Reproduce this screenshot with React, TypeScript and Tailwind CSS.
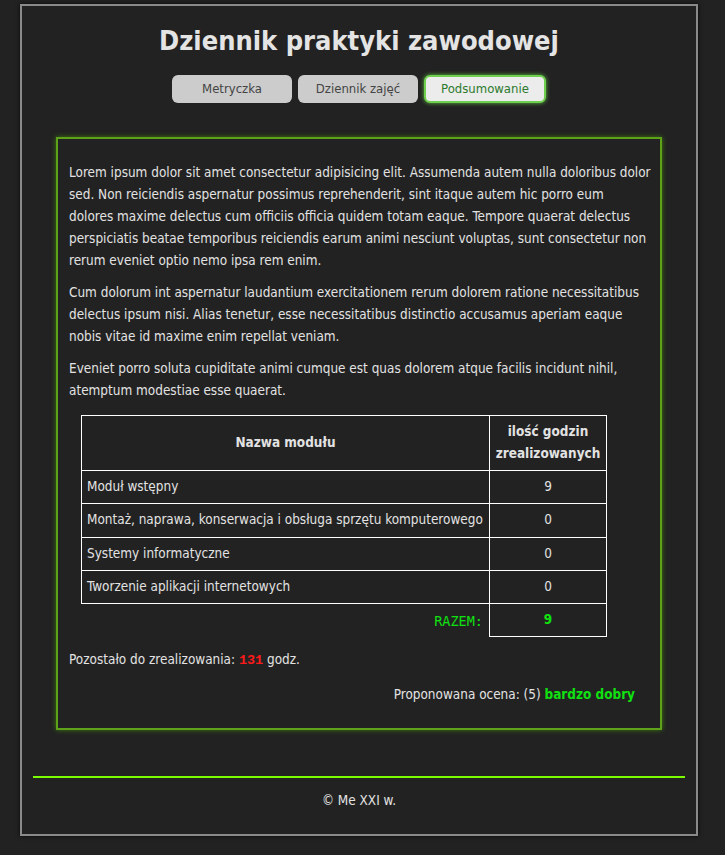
import React from "react";

const rows = [
  { name: "Moduł wstępny", hours: 9 },
  { name: "Montaż, naprawa, konserwacja i obsługa sprzętu komputerowego", hours: 0 },
  { name: "Systemy informatyczne", hours: 0 },
  { name: "Tworzenie aplikacji internetowych", hours: 0 },
];

const tabs = ["Metryczka", "Dziennik zajęć", "Podsumowanie"];

export default function App() {
  const total = rows.reduce((s, r) => s + r.hours, 0);

  return (
    <div className="min-h-[855px] bg-[#222222] pt-[4px] text-[13.45px] text-[#e2e2e2] font-['DejaVu_Sans_Condensed',Tahoma,sans-serif]">
      <div className="ml-[20px] w-[678px] h-[832px] border-2 border-[#8a8a8a] shadow-[0_0_4px_rgba(0,0,0,0.8)] flex flex-col">
        <h1 className="mt-[18px] text-center text-[27px] leading-[34px] font-bold text-[#e4e4e4]">
          Dziennik praktyki zawodowej
        </h1>

        <div className="mt-[17px] flex justify-center gap-[6px]">
          {tabs.map((t, i) =>
            i === 2 ? (
              <button
                key={t}
                className="w-[122px] h-[28px] rounded-[6px] bg-[#ececec] text-[#2d7a2d] border-2 border-[#6fcf4f] shadow-[0_0_4px_#5fbf3f] text-[13px]"
              >
                {t}
              </button>
            ) : (
              <button
                key={t}
                className="w-[120px] h-[28px] rounded-[6px] bg-[#cccccc] text-[#444] text-[13px]"
              >
                {t}
              </button>
            )
          )}
        </div>

        <div className="ml-[34px] mt-[34px] w-[606px] h-[593px] border-2 border-[#5da218] shadow-[0_0_5px_#3f7a10] pl-[11px] pr-[6px] pt-[23px] leading-[22px]">
          <p>
            Lorem ipsum dolor sit amet consectetur adipisicing elit. Assumenda autem nulla doloribus dolor
            sed. Non reiciendis aspernatur possimus reprehenderit, sint itaque autem hic porro eum
            <br />
            dolores maxime delectus cum officiis officia quidem totam eaque. Tempore quaerat delectus
            perspiciatis beatae temporibus reiciendis earum animi nesciunt voluptas, sunt consectetur non
            rerum eveniet optio nemo ipsa rem enim.
          </p>
          <p className="mt-[10px]">
            Cum dolorum int aspernatur laudantium exercitationem rerum dolorem ratione necessitatibus
            delectus ipsum nisi. Alias tenetur, esse necessitatibus distinctio accusamus aperiam eaque
            nobis vitae id maxime enim repellat veniam.
          </p>
          <p className="mt-[10px]">
            Eveniet porro soluta cupiditate animi cumque est quas dolorem atque facilis incidunt nihil,
            atemptum modestiae esse quaerat.
          </p>

          <table className="mt-[13px] ml-[12px] border-collapse">
            <thead>
              <tr>
                <th className="border border-white w-[408px] h-[55px] font-bold">Nazwa modułu</th>
                <th className="border border-white w-[117px] font-bold">
                  ilość godzin
                  <br />
                  zrealizowanych
                </th>
              </tr>
            </thead>
            <tbody>
              {rows.map((r) => (
                <tr key={r.name} className="h-[33.3px]">
                  <td className="border border-white px-[5px] text-left">{r.name}</td>
                  <td className="border border-white text-center">{r.hours}</td>
                </tr>
              ))}
              <tr className="h-[33.3px]">
                <td className="text-right pr-[6px] text-[#11e011] font-['DejaVu_Sans_Mono',monospace] text-[13.5px]">
                  RAZEM:
                </td>
                <td className="border border-white text-center font-bold text-[#11e011]">{total}</td>
              </tr>
            </tbody>
          </table>

          <p className="mt-[12px]">
            Pozostało do zrealizowania:{" "}
            <span className="font-bold text-[#ff1a1a] font-['Liberation_Mono',monospace]">131</span> godz.
          </p>
          <p className="mt-[12px] pr-[19px] text-right">
            Proponowana ocena: (5) <span className="font-bold text-[#11e011]">bardzo dobry</span>
          </p>
        </div>

        <div className="mt-[46px] mx-[11px] border-t-2 border-[#7cfc00]" />
        <p className="mt-[13px] text-center">© Me XXI w.</p>
      </div>
    </div>
  );
}
